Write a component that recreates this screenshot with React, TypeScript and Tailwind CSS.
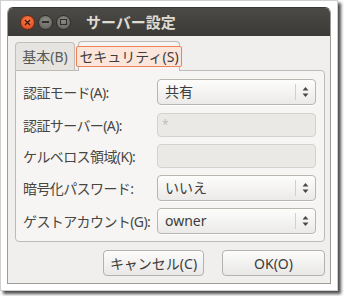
import React from 'react';

const font = { fontFamily: '"Noto Sans", "Noto Sans CJK JP", sans-serif' };

const Arrows = () => (
  <svg width="7" height="12" viewBox="0 0 7 12" className="block">
    <path d="M3.5 1 L6.5 4.5 L0.5 4.5 Z" fill="#4a4946" />
    <path d="M3.5 11 L6.5 7.5 L0.5 7.5 Z" fill="#4a4946" />
  </svg>
);

const Combo = ({ value }: { value: string }) => (
  <div className="h-[26px] w-[159px] flex items-center rounded-[4px] border border-[#b9b6b0] bg-gradient-to-b from-[#fdfdfc] to-[#ebeae8] shadow-[0_1px_0_rgba(255,255,255,0.8)]">
    <span className="flex-1 pl-[7px] text-[14px] text-[#3c3c3c] leading-none">{value}</span>
    <div className="w-px h-[16px] bg-[#d3d0cb]" />
    <div className="w-[19px] flex justify-center">
      <Arrows />
    </div>
  </div>
);

const Entry = ({ placeholder }: { placeholder?: string }) => (
  <div className="h-[24px] w-[159px] flex items-center rounded-[4px] border border-[#d5d2cd] bg-[#ebe9e6]">
    <span className="pl-[4px] text-[12px] text-[#c2beb8] leading-none">{placeholder}</span>
  </div>
);

const Row = ({ label, children, className = '' }: { label: string; children: React.ReactNode; className?: string }) => (
  <div className={`flex items-center ${className}`}>
    <span className="w-[134px] text-[14px] text-[#474643] whitespace-nowrap tracking-[-0.6px]">{label}</span>
    {children}
  </div>
);

const Button = ({ label, className = '' }: { label: string; className?: string }) => (
  <div className={`h-[26px] flex items-center justify-center rounded-[4px] border border-[#b5b2ad] bg-gradient-to-b from-[#fcfcfb] to-[#e9e8e6] text-[14px] text-[#3c3c3c] ${className}`}>
    {label}
  </div>
);

export default function App() {
  return (
    <div className="w-[344px] h-[296px] bg-white" style={font}>
      {/* Screenshot frame */}
      <div className="w-[338px] h-[291px] border border-[#cfcfcf] bg-white p-[6px] shadow-[3px_3px_3px_rgba(0,0,0,0.7)]">
        {/* Window */}
        <div className="w-[324px] h-[277px] flex flex-col rounded-t-[6px] border border-[#9e9b96] border-t-[#3a3935] overflow-hidden">
          {/* Title bar */}
          <div className="h-[28px] flex items-center bg-gradient-to-b from-[#4b4a46] to-[#3b3a36] pl-[12px]">
            <div className="flex items-center gap-[3px]">
              <div className="w-[15px] h-[15px] rounded-full bg-[radial-gradient(circle_at_50%_35%,#f77a4a,#d9471a)] border border-[#6b2a12] flex items-center justify-center">
                <svg width="7" height="7" viewBox="0 0 7 7">
                  <path d="M1 1 L6 6 M6 1 L1 6" stroke="#3a1a0c" strokeWidth="1.3" />
                </svg>
              </div>
              <div className="w-[15px] h-[15px] rounded-full bg-[radial-gradient(circle_at_50%_35%,#8d8b86,#5e5c58)] border border-[#2e2d2a] flex items-center justify-center">
                <div className="w-[7px] h-[1.5px] bg-[#2f2e2b]" />
              </div>
              <div className="w-[15px] h-[15px] rounded-full bg-[radial-gradient(circle_at_50%_35%,#8d8b86,#5e5c58)] border border-[#2e2d2a] flex items-center justify-center">
                <div className="w-[7px] h-[6px] border border-[#2f2e2b]" />
              </div>
            </div>
            <span className="ml-[15px] text-[15px] font-bold text-[#dfdbd2] leading-none">サーバー設定</span>
          </div>

          {/* Body */}
          <div className="flex-1 flex flex-col bg-[#f0efed] pl-[7px] pr-[5px] pt-[5px]">
            {/* Tabs */}
            <div className="flex items-end gap-[3px] h-[29px]">
              <div className="w-[60px] h-[28px] rounded-t-[4px] border border-b-0 border-[#c2bfba] bg-[#e6e4e1] flex items-center justify-center text-[14px] text-[#5a5955]">
                基本(B)
              </div>
              <div className="relative z-10 w-[102px] h-[30px] -mb-px rounded-t-[4px] border border-b-0 border-[#bdbab5] bg-[#f6f5f4] flex items-center justify-center">
                <div className="px-[2px] h-[21px] flex items-center border border-[#f08055] bg-[#fce6dc] rounded-[2px] text-[14px] text-[#3c3c3c] whitespace-nowrap">
                  セキュリティ(S)
                </div>
              </div>
            </div>

            {/* Panel */}
            <div className="h-[172px] rounded-b-[4px] rounded-tr-[4px] border border-[#bdbab5] bg-[#f6f5f4] pl-[7px] pt-[8px] flex flex-col gap-[7px]">
              <Row label="認証モード(A):">
                <Combo value="共有" />
              </Row>
              <Row label="認証サーバー(A):" className="mt-[1px]">
                <Entry placeholder="*" />
              </Row>
              <Row label="ケルベロス領域(K):">
                <Entry />
              </Row>
              <Row label="暗号化パスワード:">
                <Combo value="いいえ" />
              </Row>
              <Row label="ゲストアカウント(G):">
                <Combo value="owner" />
              </Row>
            </div>

            {/* Buttons */}
            <div className="mt-[8px] flex justify-end gap-[18px]">
              <Button label="キャンセル(C)" className="w-[101px]" />
              <Button label="OK(O)" className="w-[103px]" />
            </div>
          </div>
        </div>
      </div>
    </div>
  );
}
